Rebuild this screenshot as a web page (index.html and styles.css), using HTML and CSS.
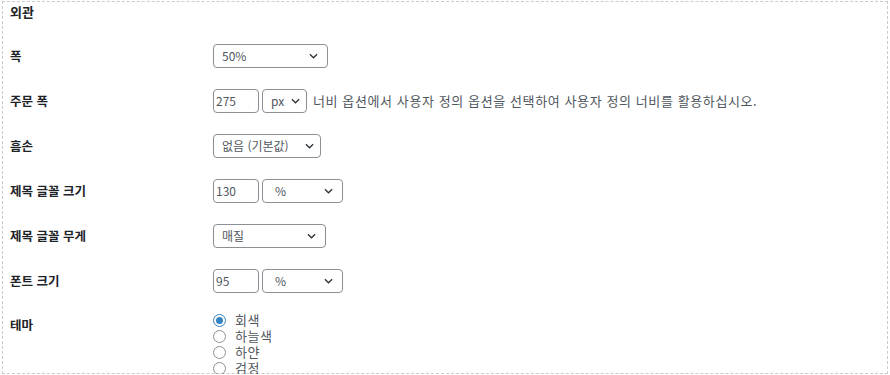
FILE: index.html
```html
<!DOCTYPE html>
<html lang="ko">
<head>
    <meta charset="UTF-8">
    <meta name="viewport" content="width=device-width, initial-scale=1.0">
    <title>외관 설정</title>
    <link rel="stylesheet" href="styles.css">
</head>
<body>
    <div class="box">
        <h3 class="section-title">외관</h3>

        <div class="row">
            <label class="row-label">폭</label>
            <div class="select w-115"><span>50%</span><svg class="chev" viewBox="0 0 10 6"><path d="M1 1l4 4 4-4"/></svg></div>
        </div>

        <div class="row">
            <label class="row-label">주문 폭</label>
            <div class="field">275</div>
            <div class="select w-45"><span>px</span><svg class="chev" viewBox="0 0 10 6"><path d="M1 1l4 4 4-4"/></svg></div>
            <span class="hint">너비 옵션에서 사용자 정의 옵션을 선택하여 사용자 정의 너비를 활용하십시오.</span>
        </div>

        <div class="row">
            <label class="row-label">흠손</label>
            <div class="select w-108"><span>없음 (기본값)</span><svg class="chev" viewBox="0 0 10 6"><path d="M1 1l4 4 4-4"/></svg></div>
        </div>

        <div class="row">
            <label class="row-label">제목 글꼴 크기</label>
            <div class="field">130</div>
            <div class="select w-81"><span>%</span><svg class="chev" viewBox="0 0 10 6"><path d="M1 1l4 4 4-4"/></svg></div>
        </div>

        <div class="row">
            <label class="row-label">제목 글꼴 무게</label>
            <div class="select w-113"><span>매질</span><svg class="chev" viewBox="0 0 10 6"><path d="M1 1l4 4 4-4"/></svg></div>
        </div>

        <div class="row">
            <label class="row-label">폰트 크기</label>
            <div class="field">95</div>
            <div class="select w-81"><span>%</span><svg class="chev" viewBox="0 0 10 6"><path d="M1 1l4 4 4-4"/></svg></div>
        </div>

        <div class="row row-top">
            <label class="row-label">테마</label>
            <div class="radios">
                <label class="radio"><span class="dot checked"></span>회색</label>
                <label class="radio"><span class="dot"></span>하늘색</label>
                <label class="radio"><span class="dot"></span>하얀</label>
                <label class="radio"><span class="dot"></span>검정</label>
            </div>
        </div>
    </div>
</body>
</html>
```

FILE: styles.css
```css
html, body {
    margin: 0;
    padding: 0;
    background: #fff;
    overflow: hidden;
}
body {
    font-family: "Noto Sans CJK KR", "Noto Sans", sans-serif;
    font-size: 13px;
    color: #1d2327;
}
.box {
    margin: 1px 2px 0 2px;
    height: 373px;
    box-sizing: border-box;
    border: 1px dashed #c9cbce;
    padding: 0 7px;
}
.section-title {
    margin: 0;
    font-size: 13px;
    font-weight: 600;
    line-height: 20px;
}
.row {
    display: flex;
    align-items: center;
    height: 45px;
}
.section-title + .row {
    margin-top: 11px;
}
.row-label {
    width: 203px;
    flex-shrink: 0;
    font-size: 12.5px;
    font-weight: 600;
    line-height: 20px;
}
.select, .field {
    box-sizing: border-box;
    height: 24px;
    border: 1px solid #8c8f94;
    border-radius: 4px;
    background: #fff;
    color: #50575e;
    display: flex;
    align-items: center;
    font-size: 12px;
}
.select {
    padding: 0 9px 0 8px;
    justify-content: space-between;
}
.field {
    width: 46px;
    padding-left: 2px;
    margin-right: 3px;
}
.chev {
    width: 9px;
    height: 6px;
    fill: none;
    stroke: #2c3338;
    stroke-width: 1.4;
}
.w-115 { width: 115px; }
.w-45 { width: 45px; padding-right: 6px; }
.w-108 { width: 108px; padding-right: 6px; }
.w-81 { width: 81px; padding-left: 12px; }
.w-113 { width: 113px; }
.hint {
    margin-left: 6px;
    color: #50575e;
    font-size: 13px;
    letter-spacing: 0.6px;
}
.row-top {
    align-items: flex-start;
    height: auto;
    padding-top: 9px;
}
.row-top .row-label {
    margin-top: 3px;
}
.radios {
    display: flex;
    flex-direction: column;
}
.radio {
    display: flex;
    align-items: center;
    height: 16px;
    line-height: 16px;
    color: #50575e;
    letter-spacing: 0.5px;
}
.dot {
    box-sizing: border-box;
    width: 13px;
    height: 13px;
    border: 1px solid #8c8f94;
    border-radius: 50%;
    margin-right: 9px;
    position: relative;
}
.dot.checked {
    border-color: #3582c4;
}
.dot.checked::after {
    content: "";
    position: absolute;
    left: 2px;
    top: 2px;
    width: 7px;
    height: 7px;
    border-radius: 50%;
    background: #3582c4;
}
```
